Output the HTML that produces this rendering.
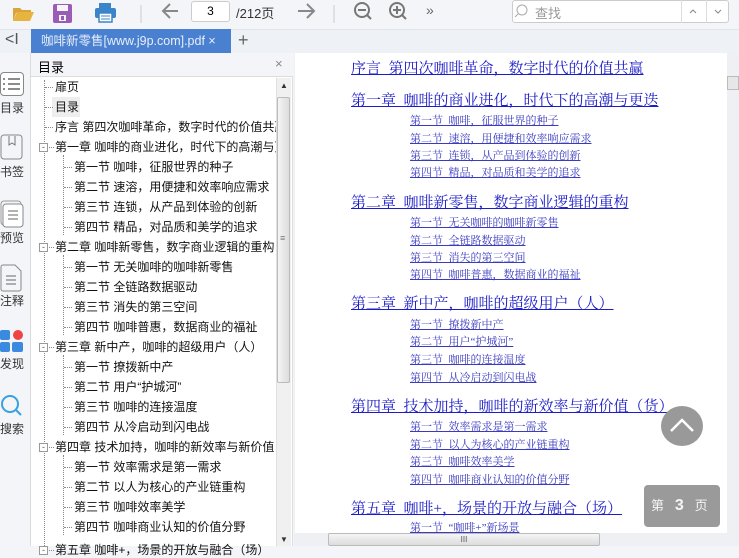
<!DOCTYPE html>
<html><head><meta charset="utf-8"><style>
*{margin:0;padding:0;box-sizing:border-box}
body{width:739px;height:546px;overflow:hidden;background:#f3f5f8;font-family:"Liberation Sans","Noto Sans CJK SC",sans-serif;position:relative}
.a{position:absolute}
.toc{position:absolute;font-size:12px;color:#111;white-space:nowrap;line-height:16px}
.ch{position:absolute;font-family:"Liberation Serif","Noto Serif CJK SC",serif;font-size:15px;color:#1c1cc8;text-decoration:underline;white-space:nowrap;line-height:18px}
.se{position:absolute;font-family:"Liberation Serif","Noto Serif CJK SC",serif;font-size:11px;color:#3b3bc0;text-decoration:underline;white-space:nowrap;line-height:14px}
.side{position:absolute;left:-2px;width:28px;text-align:center;font-size:12px;color:#333;white-space:nowrap;overflow:visible}
.dh{position:absolute;border-top:1px dotted #888;width:8px}
.dv{position:absolute;border-left:1px dotted #888}
.box{position:absolute;width:9px;height:9px;border:1px solid #999;background:#fff;font-size:9px;line-height:6px;text-align:center;color:#555}
</style></head><body>
<div class="a" style="left:0;top:0;width:739px;height:29px;background:#f3f5f8"></div>
<svg class="a" style="left:0;top:0" width="739" height="29">
<path d="M13 8h7l2 2h9v3H16l-3 8z" fill="#d9a43a"/><path d="M13 21l4-9h17l-4 9z" fill="#e8b440"/>
<rect x="53" y="4" width="19" height="19" rx="2" fill="#9a5cb4"/><rect x="57" y="5" width="11" height="6" fill="#f3f5f8"/><rect x="59" y="15" width="7" height="6" fill="#f3f5f8"/><rect x="61" y="16" width="3" height="4" fill="#9a5cb4"/>
<rect x="99" y="3" width="12" height="5" fill="#3a85c9"/><rect x="95" y="8" width="21" height="10" rx="2" fill="#3a85c9"/><rect x="99" y="13" width="13" height="9" fill="#fff" stroke="#3a85c9" stroke-width="1.5"/><line x1="101" y1="16" x2="110" y2="16" stroke="#3a85c9"/><line x1="101" y1="19" x2="110" y2="19" stroke="#3a85c9"/>
<line x1="141" y1="5" x2="141" y2="23" stroke="#ccc"/>
<path d="M178 11H164M170 4l-7 7 7 7" stroke="#888" stroke-width="2" fill="none"/>
<path d="M298 11h15M307 4l7 7-7 7" stroke="#888" stroke-width="2" fill="none"/>
<line x1="334" y1="5" x2="334" y2="23" stroke="#ccc"/>
<circle cx="362" cy="10" r="7" stroke="#777" stroke-width="2" fill="none"/><line x1="358" y1="10" x2="366" y2="10" stroke="#777" stroke-width="2"/><line x1="367" y1="15" x2="371" y2="19" stroke="#777" stroke-width="2"/>
<circle cx="397" cy="10" r="7" stroke="#777" stroke-width="2" fill="none"/><line x1="393" y1="10" x2="401" y2="10" stroke="#777" stroke-width="2"/><line x1="397" y1="6" x2="397" y2="14" stroke="#777" stroke-width="2"/><line x1="402" y1="15" x2="406" y2="19" stroke="#777" stroke-width="2"/>
</svg>
<div class="a" style="left:191px;top:1px;width:39px;height:21px;background:#fff;border:1px solid #ccc;border-radius:3px;font-size:12px;text-align:center;line-height:19px">3</div>
<div class="a" style="left:236px;top:3px;font-size:13px;color:#333">/212页</div>
<div class="a" style="left:426px;top:2px;font-size:14px;color:#666">»</div>
<div class="a" style="left:512px;top:0;width:217px;height:23px;background:#fff;border:1px solid #ccc;border-radius:3px"></div>
<div class="a" style="left:681px;top:0;width:1px;height:23px;background:#ddd"></div>
<div class="a" style="left:706px;top:0;width:1px;height:23px;background:#ddd"></div>
<svg class="a" style="left:512px;top:0" width="217" height="23"><circle cx="10" cy="10" r="5" stroke="#aaa" fill="none"/><line x1="6" y1="14" x2="3" y2="17" stroke="#aaa"/><path d="M178 13l3-3 3 3" stroke="#888" fill="none"/><path d="M203 10l3 3 3-3" stroke="#888" fill="none"/></svg>
<div class="a" style="left:535px;top:3px;font-size:13px;color:#999">查找</div>
<div class="a" style="left:0;top:29px;width:739px;height:24px;background:#eef1f5;border-top:1px solid #e2e5ea"></div>
<div class="a" style="left:5px;top:31px;font-size:16px;color:#555">&lt;I</div>
<div class="a" style="left:31px;top:29px;width:200px;height:25px;background:#4a80d0;color:#e8eefa;font-size:12.5px;line-height:25px;padding-left:10px;white-space:nowrap">咖啡新零售[www.j9p.com].pdf&nbsp;×</div>
<div class="a" style="left:238px;top:30px;font-size:18px;color:#666">+</div>
<div class="a" style="left:0;top:53px;width:31px;height:493px;background:#f3f5f8;border-right:1px solid #dcdcdc"></div>
<div class="a" style="left:0;top:72px;width:24px;height:24px;border:1px solid #888;border-radius:4px;background:#fff"></div>
<svg class="a" style="left:0;top:72px" width="30" height="24"><g stroke="#666" stroke-width="1.5"><line x1="3" y1="7" x2="5" y2="7"/><line x1="8" y1="7" x2="20" y2="7"/><line x1="3" y1="12" x2="5" y2="12"/><line x1="8" y1="12" x2="20" y2="12"/><line x1="3" y1="17" x2="5" y2="17"/><line x1="8" y1="17" x2="20" y2="17"/></g></svg>
<div class="side" style="top:99px">目录</div>
<svg class="a" style="left:0;top:134px" width="30" height="26"><rect x="1" y="1" width="21" height="24" rx="3" fill="none" stroke="#888"/><path d="M9 2v9l3-2 3 2V2" fill="none" stroke="#777"/></svg>
<div class="side" style="top:163px">书签</div>
<svg class="a" style="left:0;top:200px" width="30" height="28"><rect x="1" y="1" width="20" height="24" rx="3" fill="none" stroke="#999"/><rect x="3" y="4" width="20" height="23" rx="3" fill="#fff" stroke="#888"/><g stroke="#666"><line x1="8" y1="11" x2="18" y2="11"/><line x1="8" y1="15" x2="18" y2="15"/><line x1="8" y1="19" x2="18" y2="19"/></g></svg>
<div class="side" style="top:229px">预览</div>
<svg class="a" style="left:0;top:264px" width="30" height="28"><path d="M1 3a2 2 0 012-2h12l6 6v18a2 2 0 01-2 2H3a2 2 0 01-2-2z" fill="none" stroke="#888"/><g stroke="#666"><line x1="6" y1="12" x2="16" y2="12"/><line x1="6" y1="16" x2="16" y2="16"/><line x1="6" y1="20" x2="16" y2="20"/></g></svg>
<div class="side" style="top:292px">注释</div>
<svg class="a" style="left:0;top:328px" width="30" height="26"><rect x="0" y="2" width="10" height="10" rx="2" fill="#3a8be0"/><circle cx="18" cy="7" r="5" fill="#ee4444"/><rect x="0" y="14" width="10" height="10" rx="2" fill="#3a8be0"/><rect x="12" y="14" width="11" height="10" rx="2" fill="#3a8be0"/></svg>
<div class="side" style="top:355px">发现</div>
<svg class="a" style="left:0;top:393px" width="30" height="28"><circle cx="10" cy="11" r="8" fill="none" stroke="#3aa0e0" stroke-width="2"/><line x1="16" y1="17" x2="21" y2="22" stroke="#3aa0e0" stroke-width="2"/></svg>
<div class="side" style="top:420px">搜索</div>
<div class="a" style="left:31px;top:53px;width:262px;height:493px;background:#fff;border-right:1px solid #ddd"></div>
<div class="a" style="left:31px;top:53px;width:262px;height:24px;background:#f3f5f8;border-bottom:1px solid #dcdcdc"></div>
<div class="a" style="left:38px;top:57px;font-size:13px">目录</div>
<div class="a" style="left:275px;top:56px;font-size:13px;color:#888">×</div>
<div class="a" style="left:276px;top:78px;width:15px;height:468px;background:#f0f0f0;border-left:1px solid #e0e0e0"></div>
<div class="a" style="left:277px;top:97px;width:13px;height:286px;background:linear-gradient(90deg,#f5f5f5,#dcdcdc);border:1px solid #bbb;border-radius:2px"></div>
<div class="a" style="left:280px;top:81px;font-size:8px;color:#333">▲</div>
<div class="a" style="left:280px;top:233px;font-size:9px;color:#777">≡</div>
<div class="a" style="left:280px;top:535px;font-size:8px;color:#333">▼</div>
<div class="a" style="left:52px;top:97px;width:28px;height:20px;background:#eee"></div>
<div class="dv" style="left:44px;top:80px;height:466px"></div>
<div class="dv" style="left:63px;top:155px;height:80px"></div>
<div class="dv" style="left:63px;top:255px;height:80px"></div>
<div class="dv" style="left:63px;top:355px;height:80px"></div>
<div class="dv" style="left:63px;top:455px;height:80px"></div>
<div id="t"></div>
<script>
var L=[[0,'扉页'],[0,'目录'],[0,'序言 第四次咖啡革命，数字时代的价值共赢'],[1,'第一章 咖啡的商业进化，时代下的高潮与更迭'],[2,'第一节 咖啡，征服世界的种子'],[2,'第二节 速溶，用便捷和效率响应需求'],[2,'第三节 连锁，从产品到体验的创新'],[2,'第四节 精品，对品质和美学的追求'],[1,'第二章 咖啡新零售，数字商业逻辑的重构'],[2,'第一节 无关咖啡的咖啡新零售'],[2,'第二节 全链路数据驱动'],[2,'第三节 消失的第三空间'],[2,'第四节 咖啡普惠，数据商业的福祉'],[1,'第三章 新中产，咖啡的超级用户（人）'],[2,'第一节 撩拨新中产'],[2,'第二节 用户“护城河”'],[2,'第三节 咖啡的连接温度'],[2,'第四节 从冷启动到闪电战'],[1,'第四章 技术加持，咖啡的新效率与新价值（货）'],[2,'第一节 效率需求是第一需求'],[2,'第二节 以人为核心的产业链重构'],[2,'第三节 咖啡效率美学'],[2,'第四节 咖啡商业认知的价值分野'],[1,'第五章 咖啡+，场景的开放与融合（场）']];
var h='';L.forEach(function(e,i){var y=79+i*20+(i==23?3:0);var x=e[0]==2?74:55;
if(e[0]==2)h+='<div class="dh" style="left:64px;top:'+(y+8)+'px"></div>';
else if(e[0]==1)h+='<div class="box" style="left:39px;top:'+(y+4)+'px">-</div><div class="dh" style="left:49px;top:'+(y+8)+'px;width:5px"></div>';
else h+='<div class="dh" style="left:45px;top:'+(y+8)+'px"></div>';
h+='<div class="toc" style="left:'+x+'px;top:'+y+'px;width:'+(276-x)+'px;overflow:hidden">'+e[1]+'</div>';});
document.getElementById('t').innerHTML=h;
</script>
<div class="a" style="left:294px;top:53px;width:445px;height:493px;background:#eef0f3"></div>
<div class="a" style="left:295px;top:53px;width:432px;height:480px;background:#fff"></div>
<div id="c"></div>
<script>
var C=[['c',60,'序言&nbsp;&nbsp;第四次咖啡革命，数字时代的价值共赢'],['c',92,'第一章&nbsp;&nbsp;咖啡的商业进化，时代下的高潮与更迭'],['s',114,'第一节&nbsp;&nbsp;咖啡，征服世界的种子'],['s',132,'第二节&nbsp;&nbsp;速溶，用便捷和效率响应需求'],['s',149,'第三节&nbsp;&nbsp;连锁，从产品到体验的创新'],['s',166,'第四节&nbsp;&nbsp;精品，对品质和美学的追求'],
['c',194,'第二章&nbsp;&nbsp;咖啡新零售，数字商业逻辑的重构'],['s',216,'第一节&nbsp;&nbsp;无关咖啡的咖啡新零售'],['s',234,'第二节&nbsp;&nbsp;全链路数据驱动'],['s',251,'第三节&nbsp;&nbsp;消失的第三空间'],['s',268,'第四节&nbsp;&nbsp;咖啡普惠，数据商业的福祉'],
['c',295,'第三章&nbsp;&nbsp;新中产，咖啡的超级用户（人）'],['s',318,'第一节&nbsp;&nbsp;撩拨新中产'],['s',335,'第二节&nbsp;&nbsp;用户“护城河”'],['s',353,'第三节&nbsp;&nbsp;咖啡的连接温度'],['s',371,'第四节&nbsp;&nbsp;从冷启动到闪电战'],
['c',398,'第四章&nbsp;&nbsp;技术加持，咖啡的新效率与新价值（货）'],['s',420,'第一节&nbsp;&nbsp;效率需求是第一需求'],['s',438,'第二节&nbsp;&nbsp;以人为核心的产业链重构'],['s',455,'第三节&nbsp;&nbsp;咖啡效率美学'],['s',473,'第四节&nbsp;&nbsp;咖啡商业认知的价值分野'],
['c',500,'第五章&nbsp;&nbsp;咖啡+，场景的开放与融合（场）'],['s',521,'第一节&nbsp;&nbsp;“咖啡+”新场景']];
var h2='';C.forEach(function(e){h2+='<div class="'+(e[0]=='c'?'ch':'se')+'" style="left:'+(e[0]=='c'?351:410)+'px;top:'+e[1]+'px">'+e[2]+'</div>';});
document.getElementById('c').innerHTML=h2;
</script>
<div class="a" style="left:295px;top:533px;width:432px;height:13px;background:#eef0f3"></div>
<div class="a" style="left:328px;top:533px;width:272px;height:13px;background:linear-gradient(#f5f5f5,#dcdcdc);border:1px solid #bbb;border-radius:2px;font-size:8px;text-align:center;line-height:11px;color:#555">III</div>
<div class="a" style="left:727px;top:53px;width:12px;height:480px;background:#eef0f3"></div>
<div class="a" style="left:727px;top:76px;width:12px;height:14px;background:#e6e6e6;border:1px solid #bbb"></div>
<div class="a" style="left:661px;top:406px;width:42px;height:40px;border-radius:50%;background:#999"></div>
<svg class="a" style="left:661px;top:406px" width="42" height="40"><path d="M10 25l11-11 11 11" stroke="#fff" stroke-width="2.5" fill="none"/></svg>
<div class="a" style="left:644px;top:485px;width:76px;height:42px;border-radius:4px;background:#9a9a9a;color:#f5f5f5;font-size:13px;line-height:42px;white-space:nowrap;padding-left:7px">第&nbsp;&nbsp;&nbsp;<b style="font-size:16px">3</b>&nbsp;&nbsp;&nbsp;页</div>
</body></html>
